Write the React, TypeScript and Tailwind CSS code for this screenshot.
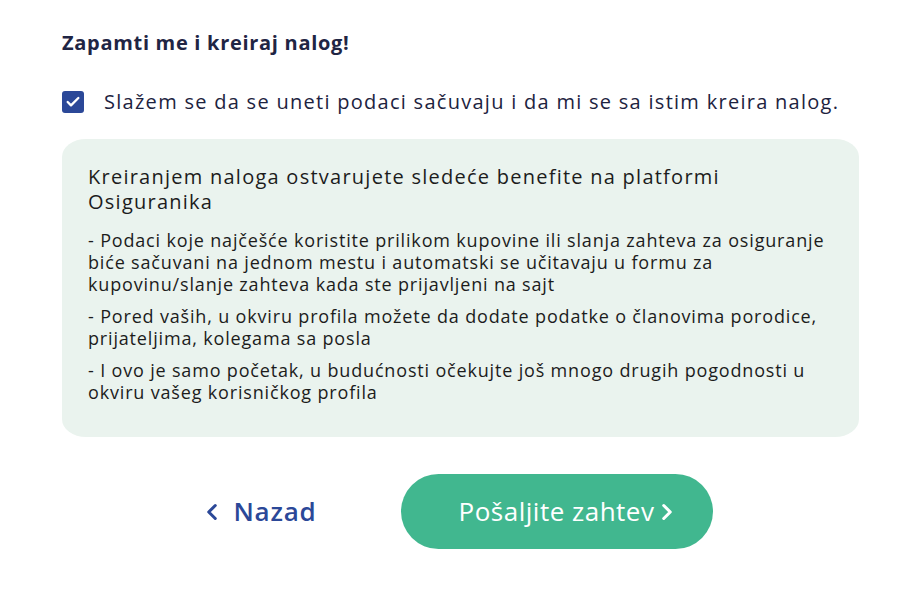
import { Check, ChevronLeft, ChevronRight } from 'lucide-react'

/** Stavke benefita — prelomi redova kao na referenci */
const BENEFITS: string[][] = [
  [
    '- Podaci koje najčešće koristite prilikom kupovine ili slanja zahteva za osiguranje',
    'biće sačuvani na jednom mestu i automatski se učitavaju u formu za',
    'kupovinu/slanje zahteva kada ste prijavljeni na sajt',
  ],
  [
    '- Pored vaših, u okviru profila možete da dodate podatke o članovima porodice,',
    'prijateljima, kolegama sa posla',
  ],
  [
    '- I ovo je samo početak, u budućnosti očekujte još mnogo drugih pogodnosti u',
    'okviru vašeg korisničkog profila',
  ],
]

const App = () => {
  return (
    <div className="min-h-[609px] w-[924px] bg-white font-['Open_Sans',sans-serif] text-[#1d2340]">
      <div className="pl-[62px] pr-[65px] pt-[29px]">
        {/* Naslov */}
        <h2 className="text-[20px] font-bold leading-[28px] tracking-[0.7px] text-[#1f2544]">
          Zapamti me i kreiraj nalog!
        </h2>

        {/* Saglasnost */}
        <label className="mt-[31px] flex items-center gap-[20px]">
          <span className="flex h-[22px] w-[22px] shrink-0 items-center justify-center rounded-[3px] bg-[#2b4898]">
            <Check size={16} strokeWidth={3.5} color="#fff" />
          </span>
          <span className="whitespace-nowrap text-[20px] font-medium leading-[28px] tracking-[1.28px]">
            Slažem se da se uneti podaci sačuvaju i da mi se sa istim kreira
            nalog.
          </span>
        </label>

        {/* Benefiti */}
        <div className="mt-[23px] rounded-[24px/18px] bg-[#eaf3ee] px-[26px] pb-[34px] pt-[25px] text-[#1c1c1c]">
          <p className="flex flex-col text-[20px] leading-[25px] tracking-[1.25px]">
            <span>Kreiranjem naloga ostvarujete sledeće benefite na platformi</span>
            <span>Osiguranika</span>
          </p>
          <div className="mt-[15px] flex flex-col gap-[10px]">
            {BENEFITS.map((lines) => (
              <p
                key={lines[0]}
                className="whitespace-nowrap text-[18px] leading-[22px] tracking-[0.83px]"
              >
                {lines.map((l, i) => (
                  <span key={i}>
                    {l}
                    {i < lines.length - 1 && <br />}
                  </span>
                ))}
              </p>
            ))}
          </div>
        </div>

        {/* Akcije */}
        <div className="mt-[37px] flex items-center justify-center gap-[84px] pr-[9px]">
          <button className="flex items-center gap-[8px] text-[26px] font-semibold tracking-[0.8px] text-[#2b4898]">
            <ChevronLeft size={26} strokeWidth={2.8} />
            Nazad
          </button>
          <button className="flex h-[75px] w-[312px] items-center rounded-full bg-[#41b78f] pl-[58px] text-[26px] tracking-[0.5px] text-white">
            Pošaljite zahtev
            <ChevronRight size={26} strokeWidth={2.8} />
          </button>
        </div>
      </div>
    </div>
  )
}

export default App
